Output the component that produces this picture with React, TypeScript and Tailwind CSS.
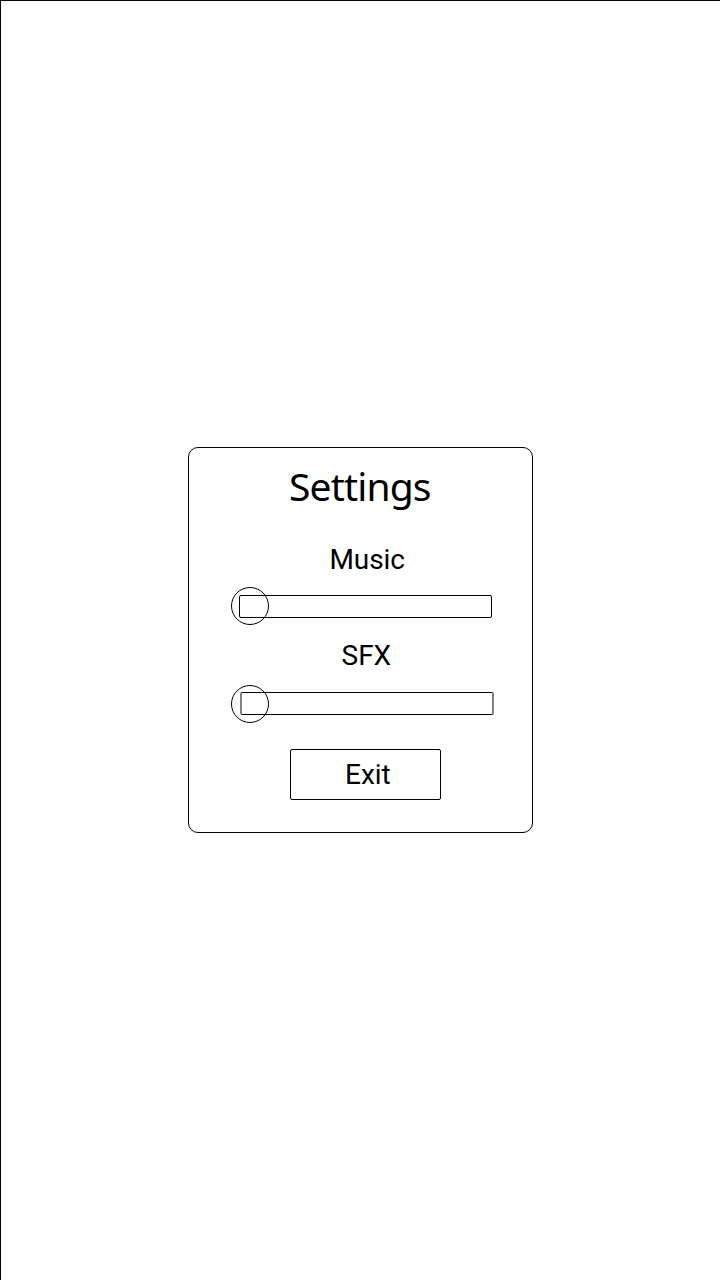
type SliderProps = { label: string; track: string };

function VolumeSlider({ label, track }: SliderProps) {
  return (
    <div
      role="slider"
      aria-label={label}
      aria-valuemin={0}
      aria-valuemax={100}
      aria-valuenow={0}
      className="relative ml-[42px] flex h-[38px] items-start pt-2"
    >
      <div className={track} />
      <span className="absolute top-0 left-0 size-[38px] rounded-full border border-black" />
    </div>
  );
}

export default function App() {
  return (
    <main className="flex h-[1280px] w-[720px] flex-col items-start border-t border-l border-black bg-white pt-[446px] pl-[187px] font-['Roboto',sans-serif] text-[28px] leading-8 text-black">
      <section className="flex h-[386px] w-[345px] flex-col rounded-[10px] border border-black">
        <h1 className="mt-[14px] ml-[100px] h-12 whitespace-nowrap font-['Noto_Sans',sans-serif] text-[39px] leading-[48px] tracking-[-0.85px]">
          Settings
        </h1>
        <h2 className="mt-[34px] ml-[140.5px] h-8 tracking-[-0.1px]">Music</h2>
        <div className="mt-[11px]">
          <VolumeSlider
            label="Music"
            track="ml-2 h-[23px] w-[253px] rounded-[2px] border border-black"
          />
        </div>
        <h2 className="mt-[15px] ml-[152.5px] h-8">SFX</h2>
        <div className="mt-[13px]">
          <VolumeSlider
            label="SFX"
            track="-mt-px ml-[9px] h-[23px] w-[254px] rounded-[2px] border border-x-2 border-black border-x-[#808080]"
          />
        </div>
        <button className="mt-[26px] ml-[101px] h-[51px] w-[151px] rounded-[2px] border border-black pl-[54px] text-left">
          Exit
        </button>
      </section>
    </main>
  );
}
